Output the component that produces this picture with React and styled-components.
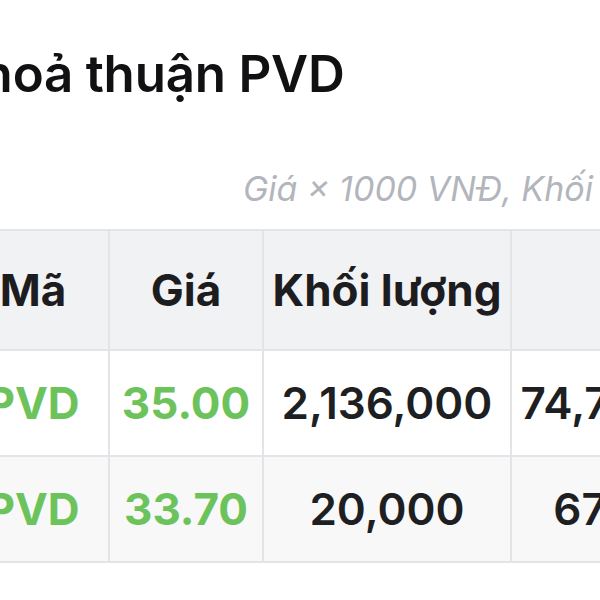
import React from 'react';
import styled, { createGlobalStyle } from 'styled-components';

const GlobalStyle = createGlobalStyle`
  html, body {
    margin: 0;
    padding: 0;
    background: #ffffff;
    overflow: hidden;
  }
  body {
    font-family: Inter, "Noto Sans", "Liberation Sans", sans-serif;
    color: #1c1c1e;
  }
`;

const Page = styled.div`
  width: 1200px;
  margin-left: -44px;
  display: flex;
  flex-direction: column;
`;

const Title = styled.h1`
  margin: 42px 0 0 -234px;
  font-size: 51px;
  line-height: 64px;
  font-weight: 600;
  letter-spacing: -0.2px;
  white-space: nowrap;
  color: #111113;
`;

const Note = styled.div`
  margin: 62px 0 0 287px;
  font-size: 34px;
  line-height: 42px;
  font-style: italic;
  color: #b3b5bc;
  white-space: nowrap;
`;

const Table = styled.table`
  margin-top: 19px;
  border-collapse: collapse;
  table-layout: fixed;
  width: 916px;
`;

const Head = styled.th`
  height: 118px;
  padding: 0 8px;
  background: #f1f2f4;
  border: 2px solid #e3e4e7;
  font-size: 44px;
  font-weight: 700;
  color: #1d1d1f;
  text-align: center;
  white-space: nowrap;
`;

const Row = styled.tr`
  background: ${p => (p.$striped ? '#f8f8f9' : '#ffffff')};
`;

const Cell = styled.td`
  height: 104px;
  padding: 0 8px;
  border: 2px solid #e3e4e7;
  font-size: 44px;
  font-weight: ${p => (p.$up ? 700 : 600)};
  color: ${p => (p.$up ? '#6dc35b' : '#1e1f22')};
  text-align: center;
  white-space: nowrap;
`;

const rows = [
  { code: 'PVD', price: '35.00', volume: '2,136,000', value: '74,760,000,000' },
  { code: 'PVD', price: '33.70', volume: '20,000', value: '674,000,000' }
];

export default function App() {
  return (
    <>
      <GlobalStyle />
      <Page>
        <Title>Giao dịch thoả thuận PVD</Title>
        <Note>Giá × 1000 VNĐ, Khối lượng: cổ phiếu</Note>
        <Table>
          <colgroup>
            <col style={{ width: 152 }} />
            <col style={{ width: 154 }} />
            <col style={{ width: 248 }} />
            <col style={{ width: 362 }} />
          </colgroup>
          <thead>
            <tr>
              <Head>Mã</Head>
              <Head>Giá</Head>
              <Head>Khối lượng</Head>
              <Head>Giá trị</Head>
            </tr>
          </thead>
          <tbody>
            {rows.map((r, i) => (
              <Row key={i} $striped={i % 2 === 1}>
                <Cell $up>{r.code}</Cell>
                <Cell $up>{r.price}</Cell>
                <Cell>{r.volume}</Cell>
                <Cell>{r.value}</Cell>
              </Row>
            ))}
          </tbody>
        </Table>
      </Page>
    </>
  );
}
